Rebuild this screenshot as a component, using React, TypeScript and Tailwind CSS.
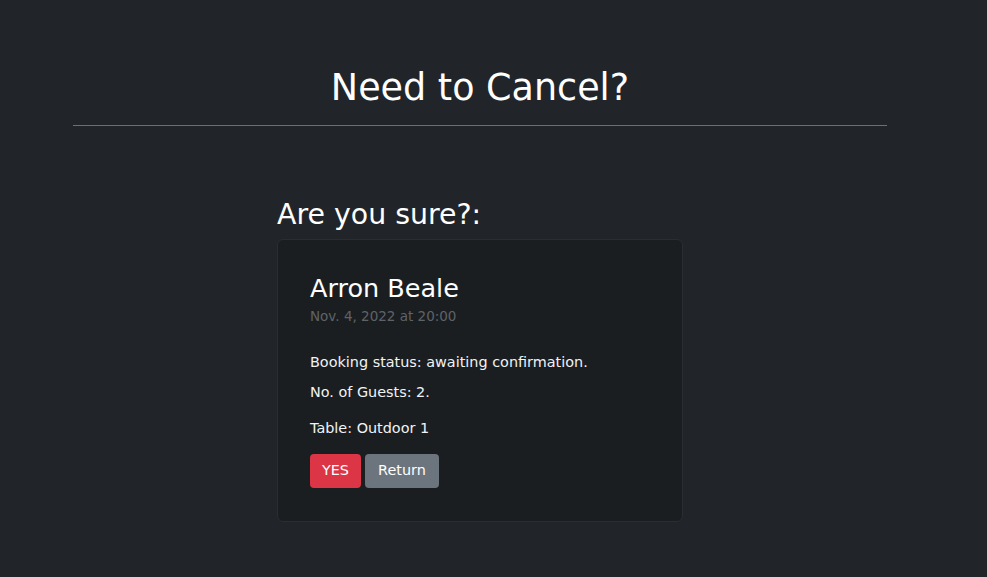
import React from "react";

const font = { fontFamily: "'DejaVu Sans', 'Open Sans', sans-serif" };

export default function App() {
  return (
    <div
      className="min-h-[577px] w-full bg-[#212529] text-[#f1f3f5]"
      style={font}
    >
      <div className="w-[814px] ml-[73px] pt-[66px]">
        <h1 className="text-center text-[36.5px] leading-[44px] text-white">
          Need to Cancel?
        </h1>
        <hr className="mt-[15px] border-0 border-t border-[#6c6f73]" />
      </div>

      <div className="w-[406px] ml-[277px] mt-[71px]">
        <h2 className="text-[28.4px] leading-[36px] text-white">Are you sure?:</h2>
        <div className="mt-[6px] rounded-[6px] border border-[#2a2d31] bg-[#1b1e21] px-[32px] pt-[33px] pb-[33px]">
          <h4 className="text-[25.5px] leading-[30px] text-white">Arron Beale</h4>
          <p className="mt-[3px] text-[13.5px] leading-[20px] text-[#5f6368]">
            Nov. 4, 2022 at 20:00
          </p>
          <p className="mt-[26px] text-[14.4px] leading-[20px]">
            Booking status: awaiting confirmation.
          </p>
          <p className="mt-[10px] text-[14.4px] leading-[20px]">No. of Guests: 2.</p>
          <p className="mt-[16px] text-[14.4px] leading-[20px]">Table: Outdoor 1</p>
          <div className="mt-[16px] flex gap-[4px]">
            <button className="h-[34px] w-[51px] rounded-[4px] bg-[#dc3545] text-[14.4px] text-white">
              YES
            </button>
            <button className="h-[34px] w-[74px] rounded-[4px] bg-[#6c757d] text-[14.4px] text-white">
              Return
            </button>
          </div>
        </div>
      </div>
    </div>
  );
}
